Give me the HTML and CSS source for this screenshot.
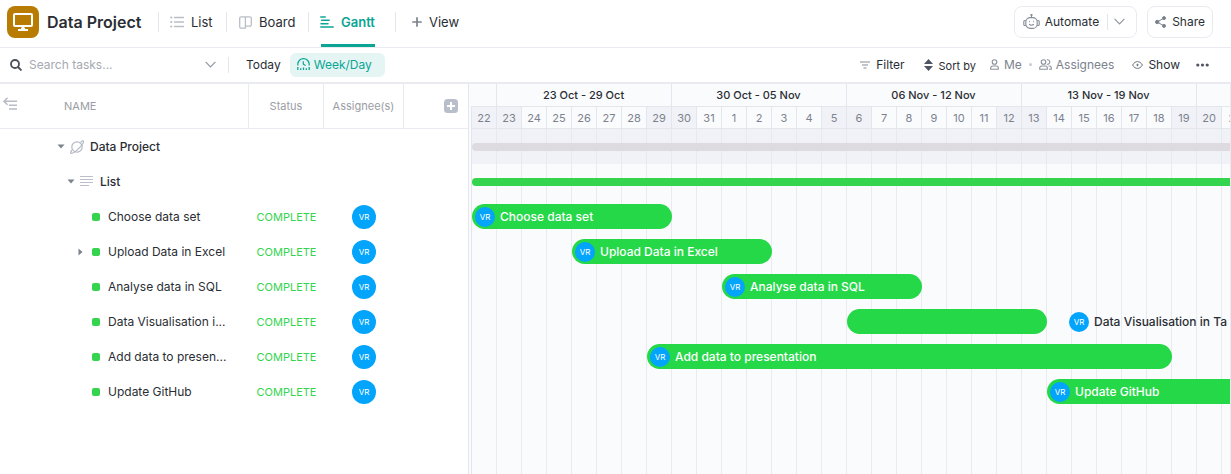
FILE: index.html
```html
<!DOCTYPE html>
<html lang="en">
<head>
<meta charset="utf-8">
<title>Data Project – Gantt</title>
<link rel="stylesheet" href="styles.css">
</head>
<body>
<div class="app">
  <header class="topbar">
    <span class="project-icon">
      <svg width="20" height="18" viewBox="0 0 20 18" fill="none" stroke="#fff" stroke-width="2"><rect x="1" y="1" width="18" height="12" rx="1"/><path d="M10 13v3M5 17h10M8 15.5h4"/></svg>
    </span>
    <h1 class="title">Data Project</h1>
    <nav class="tabs">
      <a class="tab tab-list" href="#">
        <svg width="14" height="12" viewBox="0 0 14 12" fill="none" stroke="#b9bec7" stroke-width="1.3" stroke-linecap="round"><path d="M4.5 1.5h9M4.5 6h9M4.5 10.5h9"/><path d="M1.2 1.5h.1M1.2 6h.1M1.2 10.5h.1" stroke-width="2.2"/></svg>
        List</a>
      <a class="tab tab-board" href="#">
        <svg width="13" height="13" viewBox="0 0 13 13" fill="none" stroke="#b9bec7" stroke-width="1.3"><path d="M2.2.8h4.2v11.4H2.2A1.5 1.5 0 0 1 .7 10.7V2.3A1.5 1.5 0 0 1 2.2.8zM6.4.8h4.4a1.5 1.5 0 0 1 1.5 1.5v6.4a1.5 1.5 0 0 1-1.5 1.5H6.4"/></svg>
        Board</a>
      <a class="tab tab-gantt active" href="#" aria-current="page">
        <svg width="14" height="12" viewBox="0 0 14 12" fill="none" stroke="#0ba594" stroke-width="1.5" stroke-linecap="round"><path d="M.8 1h4.4M1.6 4.3h7.6M1 7.7h7M.8 11h12.4"/></svg>
        Gantt</a>
      <a class="tab tab-view" href="#">
        <svg width="10" height="10" viewBox="0 0 10 10" stroke="#7c828d" stroke-width="1.7" stroke-linecap="round"><path d="M5 .9v8.2M.9 5h8.2"/></svg>
        View</a>
    </nav>
    <div class="actions">
      <div class="split">
        <button class="split-main" type="button">
          <svg width="17" height="16" viewBox="0 0 17 16" fill="none" stroke="#858b96" stroke-width="1.1"><rect x="2.8" y="3.6" width="11.4" height="10.8" rx="4.5"/><path d="M8.5 3.6V1M2.8 6.500H1.8a1 1 0 0 0-1 1v3a1 1 0 0 0 1 1h1M14.2 6.500h1a1 1 0 0 1 1 1v3a1 1 0 0 1-1 1h-1M6.200 10.200c1 1.300 3.600 1.300 4.600 0"/><circle cx="8.5" cy="1" r=".6"/><path d="M6.200 7.500h.8M10 7.500h.8" stroke-width="1.4"/></svg>
          Automate</button>
        <button class="split-more" type="button" aria-label="More automations">
          <svg width="11" height="7" viewBox="0 0 11 7" fill="none" stroke="#9096a1" stroke-width="1.2"><path d="M.6.8l4.900 5 4.900-5"/></svg>
        </button>
      </div>
      <button class="share" type="button">
        <svg width="11" height="12" viewBox="0 0 11 12" fill="#7c828d" stroke="#7c828d"><path d="M9 2L2.300 6 9 10" fill="none"/><circle cx="9" cy="2.1" r="1.5"/><circle cx="2.2" cy="6" r="1.7"/><circle cx="9" cy="9.9" r="1.5"/></svg>
        Share</button>
    </div>
  </header>

  <div class="filterbar">
    <label class="search">
      <svg width="12" height="12" viewBox="0 0 12 12" fill="none" stroke="#4a4f59" stroke-width="1.8"><circle cx="5" cy="5" r="4"/><path d="M8 8l3.500 3.500"/></svg>
      <input type="text" placeholder="Search tasks..." aria-label="Search tasks">
    </label>
    <button class="plain chev" type="button" aria-label="Search options">
      <svg width="11" height="7" viewBox="0 0 11 7" fill="none" stroke="#9096a1" stroke-width="1.2"><path d="M.6.8l4.900 5 4.900-5"/></svg>
    </button>
    <span class="divider"></span>
    <button class="plain today" type="button">Today</button>
    <button class="scale" type="button">
      <svg width="13" height="13" viewBox="0 0 13 13" fill="none" stroke="#0ba594" stroke-width="1.2"><path d="M.8 7.500V6.300a5.700 5.700 0 0 1 11.400 0v1.200M6.300 3.200v3l2.300 1.300"/><path d="M.8 9v3M3.700 10.300V12M6.500 9.600V12M9.300 10.300V12M12.200 9v3" stroke-width="1.3"/></svg>
      Week/Day</button>
    <div class="tools">
      <button class="plain" type="button">
        <svg width="10" height="8" viewBox="0 0 10 8" stroke="#858b96" stroke-width="1.2"><path d="M0 1h10M2 4h6M3.500 7h3"/></svg>
        Filter</button>
      <button class="plain sort" type="button">
        <svg width="9" height="12" viewBox="0 0 9 12" fill="#4f5560"><path d="M4.500 0L9 5H0zM4.500 12L9 7H0z"/></svg>
        <span class="sort-label">Sort by</span></button>
      <button class="plain muted me" type="button">
        <svg width="9" height="11" viewBox="0 0 9 11" fill="none" stroke="#8a909b" stroke-width="1.1"><circle cx="4.5" cy="3" r="2.3"/><path d="M.7 10.300V9a2 2 0 0 1 2-2h3.600a2 2 0 0 1 2 2v1.300z"/></svg>
        Me</button>
      <span class="dot"></span>
      <button class="plain muted assignees" type="button">
        <svg width="13" height="11" viewBox="0 0 13 11" fill="none" stroke="#8a909b" stroke-width="1.1"><circle cx="4.5" cy="3" r="2.3"/><path d="M.7 10.300V9a2 2 0 0 1 2-2h3.600a2 2 0 0 1 2 2v1.300zM7.800.8a2.300 2.300 0 1 1 0 4.400M9.500 7h.8a2 2 0 0 1 2 2v1.300h-2.300"/></svg>
        Assignees</button>
      <button class="plain show" type="button">
        <svg width="11" height="8" viewBox="0 0 11 8" fill="none" stroke="#6b717c"><path d="M.6 4C2 1.600 3.700.6 5.500.6S9 1.600 10.400 4C9 6.400 7.300 7.400 5.500 7.400S2 6.400.6 4z"/><circle cx="5.5" cy="4" r=".7" fill="#6b717c"/></svg>
        Show</button>
      <button class="plain more" type="button" aria-label="More options">
        <svg width="13" height="4" viewBox="0 0 13 4" fill="#4f5560"><circle cx="1.8" cy="2" r="1.6"/><circle cx="6.5" cy="2" r="1.6"/><circle cx="11.2" cy="2" r="1.6"/></svg>
      </button>
    </div>
  </div>

  <main class="workspace">
    <section class="tasks">
      <table class="task-table">
        <colgroup><col class="c-name"><col class="c-status"><col class="c-assignee"><col class="c-add"></colgroup>
        <thead>
          <tr>
            <th scope="col"><div class="name-head">
              <button class="plain collapse" type="button" aria-label="Collapse list">
                <svg width="14" height="13" viewBox="0 0 14 13" fill="none" stroke="#b7bcc6" stroke-width="1.6"><path d="M4.500.8L1 4.300l3.500 3.500M1 4.300h13M6 8.200h8M6 12h8"/></svg>
              </button>NAME</div></th>
            <th scope="col">Status</th>
            <th scope="col">Assignee(s)</th>
            <th scope="col"><button class="plain add" type="button" aria-label="Add column">
              <svg width="14" height="14" viewBox="0 0 14 14"><rect width="14" height="14" rx="3.5" fill="#b9becb"/><path d="M7 3v8M3 7h8" stroke="#fff" stroke-width="2"/></svg>
            </button></th>
          </tr>
        </thead>
        <tbody>
          <tr><td colspan="4"><div class="name level-0">
            <svg class="caret" width="8" height="5" viewBox="0 0 8 5" fill="#7c828d"><path d="M.5.500h7L4 4.500z"/></svg>
            <svg class="planet" width="14" height="14" viewBox="0 0 14 14" fill="none" stroke="#b4b9c4" stroke-width="1.2"><circle cx="7" cy="7" r="5.2"/><path d="M10.500 2.500C12 1 13.300.6 13.500 1.200c.5 1.300-2.500 5-5.200 7.700-2.700 2.600-6.200 5-7.400 4.300C.3 12.800.9 11.300 2 10"/></svg>
            Data Project</div></td></tr>
          <tr><td colspan="4"><div class="name level-1">
            <svg class="caret" width="8" height="5" viewBox="0 0 8 5" fill="#7c828d"><path d="M.5.500h7L4 4.500z"/></svg>
            <svg class="lines" width="13" height="12" viewBox="0 0 13 12" stroke="#babfc9"><path d="M0 .5h13M0 3.500h13M0 6.500h13M0 9.500h9"/></svg>
            List</div></td></tr>
          <tr><td><div class="name level-2"><i class="mark"></i><span class="label">Choose data set</span></div></td><td class="status">COMPLETE</td><td class="who"><span class="avatar">VR</span></td><td></td></tr>
          <tr><td><div class="name level-2 parent"><svg class="side-caret" width="5" height="8" viewBox="0 0 5 8" fill="#7c828d"><path d="M.5.500v7L4.500 4z"/></svg><i class="mark"></i><span class="label">Upload Data in Excel</span></div></td><td class="status">COMPLETE</td><td class="who"><span class="avatar">VR</span></td><td></td></tr>
          <tr><td><div class="name level-2"><i class="mark"></i><span class="label">Analyse data in SQL</span></div></td><td class="status">COMPLETE</td><td class="who"><span class="avatar">VR</span></td><td></td></tr>
          <tr><td><div class="name level-2"><i class="mark"></i><span class="label">Data Visualisation i...</span></div></td><td class="status">COMPLETE</td><td class="who"><span class="avatar">VR</span></td><td></td></tr>
          <tr><td><div class="name level-2"><i class="mark"></i><span class="label">Add data to presen...</span></div></td><td class="status">COMPLETE</td><td class="who"><span class="avatar">VR</span></td><td></td></tr>
          <tr><td><div class="name level-2"><i class="mark"></i><span class="label">Update GitHub</span></div></td><td class="status">COMPLETE</td><td class="who"><span class="avatar">VR</span></td><td></td></tr>
        </tbody>
      </table>
    </section>

    <section class="chart" aria-label="Timeline">
      <div class="weeks">
        <span class="week w-first"></span><span class="week">23 Oct - 29 Oct</span><span class="week">30 Oct - 05 Nov</span><span class="week">06 Nov - 12 Nov</span><span class="week">13 Nov - 19 Nov</span><span class="week"></span>
      </div>
      <div class="days">
        <span class="off">22</span><span class="off">23</span><span>24</span><span>25</span><span>26</span><span>27</span><span>28</span><span class="off">29</span><span class="off">30</span><span>31</span><span>1</span><span>2</span><span>3</span><span>4</span><span class="off">5</span><span class="off">6</span><span>7</span><span>8</span><span>9</span><span>10</span><span>11</span><span class="off">12</span><span class="off">13</span><span>14</span><span>15</span><span>16</span><span>17</span><span>18</span><span class="off">19</span><span class="off">20</span><span>21</span>
      </div>
      <div class="lanes">
        <div class="lane shaded"><div class="summary grey"></div></div>
        <div class="lane"><div class="summary green"></div></div>
        <div class="lane"><div class="bar choose"><span class="avatar small">VR</span>Choose data set</div></div>
        <div class="lane"><div class="bar upload"><span class="avatar small">VR</span>Upload Data in Excel</div></div>
        <div class="lane"><div class="bar analyse"><span class="avatar small">VR</span>Analyse data in SQL</div></div>
        <div class="lane"><div class="bar visualise"></div><div class="outside"><span class="avatar small">VR</span>Data Visualisation in Ta</div></div>
        <div class="lane"><div class="bar present"><span class="avatar small">VR</span>Add data to presentation</div></div>
        <div class="lane"><div class="bar github"><span class="avatar small">VR</span>Update GitHub</div></div>
      </div>
    </section>
  </main>
</div>
</body>
</html>
```

FILE: styles.css
```css
* { box-sizing: border-box; }

body {
  margin: 0;
  font-family: Inter, "Liberation Sans", sans-serif;
  font-size: 12px;
  line-height: 16px;
  color: #2a2e34;
  background: #fff;
}

svg { flex: none; display: block; }
a { color: inherit; text-decoration: none; }

button {
  font: inherit;
  color: inherit;
  background: none;
  border: 0;
  padding: 0;
  display: flex;
  align-items: center;
  white-space: nowrap;
  cursor: pointer;
}

.app { display: flex; flex-direction: column; min-height: 100vh; }

/* Top bar */
.topbar {
  display: flex;
  align-items: center;
  height: 48px;
  padding: 0 18px 0 7px;
  border-bottom: 1px solid #e9ebf0;
}
.project-icon {
  flex: none;
  display: flex;
  align-items: center;
  justify-content: center;
  width: 32px;
  height: 32px;
  margin-bottom: 3px;
  border-radius: 8px;
  background: #b87c04;
}
.title {
  width: 111px;
  margin: 0 0 4px 8px;
  font-size: 16px;
  line-height: 20px;
  font-weight: 600;
  white-space: nowrap;
}
.tabs { display: flex; align-self: stretch; font-size: 13px; }
.tab {
  display: flex;
  align-items: center;
  gap: 7px;
  padding: 0 0 3px 12px;
  background: linear-gradient(#e4e6ee, #e4e6ee) 0 12px / 1px 20px no-repeat;
}
.tab-list { width: 68px; }
.tab-board { width: 82px; padding-left: 13px; }
.tab-gantt { width: 87px; }
.tab-view { padding-left: 17px; }
.active {
  color: #0ba594;
  font-weight: 600;
  background:
    linear-gradient(#e4e6ee, #e4e6ee) 0 12px / 1px 20px no-repeat,
    linear-gradient(#0ba594, #0ba594) 13px 100% / 54px 3px no-repeat;
}
.actions { display: flex; gap: 10px; margin: 0 0 4px auto; }
.split, .share {
  display: flex;
  height: 32px;
  border: 1px solid #e9ebf0;
  border-radius: 8px;
}
.split-main { gap: 5px; padding: 0 8px 0 8px; }
.split-more {
  padding: 0 11px 0 7px;
  background: linear-gradient(#e4e6ee, #e4e6ee) 0 7px / 1px 16px no-repeat;
}
.share { gap: 6px; padding: 0 7px; }

/* Filter bar */
.filterbar {
  display: flex;
  align-items: center;
  height: 36px;
  padding: 0 22px 1px 10px;
  border-bottom: 2px solid #e9ebf0;
}
.search { display: flex; align-items: center; gap: 7px; width: 195px; }
.search input {
  flex: 1;
  min-width: 0;
  padding: 0;
  border: 0;
  outline: 0;
  font: inherit;
  background: none;
}
.search input::placeholder { color: #a6a9b0; opacity: 1; }
.divider { width: 1px; height: 16px; margin: 0 17px 0 12px; background: #e4e6ee; }
.scale {
  gap: 4px;
  height: 24px;
  margin-left: 9px;
  padding: 0 13px 0 7px;
  border-radius: 6px;
  background: #e5f5f4;
  color: #0ba594;
}
.tools { display: flex; align-items: center; margin-left: auto; }
.tools .plain { gap: 6px; }
.tools .sort { margin-left: 19px; }
.sort-label { padding-top: 2px; font-size: 11px; }
.tools .me { margin-left: 14px; gap: 5px; }
.tools .assignees { gap: 4px; }
.tools .show { margin-left: 18px; gap: 5px; }
.tools .more { margin-left: 16px; }
.tools .muted { color: #7c828d; }
.dot { width: 3px; height: 3px; margin: 0 7px; border-radius: 50%; background: #c8ccd8; }

/* Workspace */
.workspace { display: flex; flex: 1; }
.tasks { flex: none; border-right: 1px solid #e4e6ee; }
.task-table { width: 468px; table-layout: fixed; border-collapse: separate; border-spacing: 0; }
.c-name { width: 249px; }
.c-status { width: 75px; }
.c-assignee { width: 80px; }
.task-table th {
  height: 45px;
  padding: 0;
  border-right: 1px solid #e9ebf0;
  border-bottom: 1px solid #e9ebf0;
  font-size: 11px;
  font-weight: 400;
  color: #9a9da4;
}
.task-table th:last-child { border-right: 0; }
.name-head { display: flex; align-items: center; gap: 47px; padding-left: 3px; }
.collapse { margin-bottom: 5px; }
.add { margin-left: 40px; }
.task-table td { height: 35px; padding: 0; }
.name { display: flex; align-items: center; }
.level-0 { padding-left: 57px; font-weight: 500; }
.level-1 { padding-left: 67px; font-weight: 500; }
.level-2 { padding-left: 92px; }
.level-2.parent { padding-left: 78px; }
.planet { margin: 0 6px 0 5px; }
.lines { margin: 0 7px 0 5px; }
.side-caret { margin-right: 9px; }
.mark { flex: none; width: 8px; height: 8px; border-radius: 2px; background: #34d44e; }
.label { margin-left: 8px; white-space: nowrap; }
.status { text-align: center; font-size: 11px; color: #34d44e; }
.avatar {
  flex: none;
  display: flex;
  align-items: center;
  justify-content: center;
  width: 24px;
  height: 24px;
  margin: 0 auto;
  border-radius: 50%;
  background: #02a4fc;
  color: #fff;
  font-size: 8px;
  font-weight: 400;
}
.avatar.small { width: 20px; height: 20px; margin: 0; }

/* Timeline */
.chart {
  flex: 1;
  min-width: 0;
  display: flex;
  flex-direction: column;
  overflow: hidden;
  padding-left: 2px;
  border-right: 1px solid #e9ebf0;
  background: #fafbfd;
}
.weeks, .days { display: flex; border-bottom: 1px solid #e4e6ee; }
.week {
  flex: none;
  width: 175px;
  height: 22px;
  padding-right: 1px;
  border-right: 1px solid #e4e6ee;
  font-size: 11px;
  line-height: 22px;
  font-weight: 500;
  text-align: center;
}
.w-first { width: 26px; }
.days { border-left: 1px solid #e4e6ee; }
.days span {
  flex: none;
  width: 25px;
  height: 21px;
  border-right: 1px solid #e4e6ee;
  font-size: 11px;
  line-height: 22px;
  text-align: center;
  color: #7c828d;
}
.days .off { background: #f1f2f7; }
.lanes {
  flex: 1;
  border-left: 1px solid #e4e6ee;
  background: repeating-linear-gradient(90deg, transparent 0 24px, #e9ebf0 24px 25px);
}
.lane {
  display: grid;
  grid-template-columns: repeat(31, 25px);
  grid-template-rows: 35px;
  align-items: center;
}
.shaded { background: rgba(228, 230, 240, 0.4); }
.summary { grid-column: 1 / -1; height: 8px; border-radius: 4px; }
.grey { background: #dddbdf; }
.green { background: #34d44e; }
.bar {
  display: flex;
  align-items: center;
  gap: 5px;
  height: 25px;
  padding-left: 3px;
  border-radius: 13px;
  background: #25d848;
  color: #fff;
  font-weight: 500;
  white-space: nowrap;
}
.choose { grid-column: 1 / 9; }
.upload { grid-column: 5 / 13; }
.analyse { grid-column: 11 / 19; }
.visualise { grid-column: 16 / 24; }
.present { grid-column: 8 / 29; }
.github { grid-column: 24 / 32; }
.outside {
  grid-column: 24 / 32;
  display: flex;
  align-items: center;
  gap: 5px;
  padding-left: 22px;
  font-weight: 500;
  white-space: nowrap;
}
```
